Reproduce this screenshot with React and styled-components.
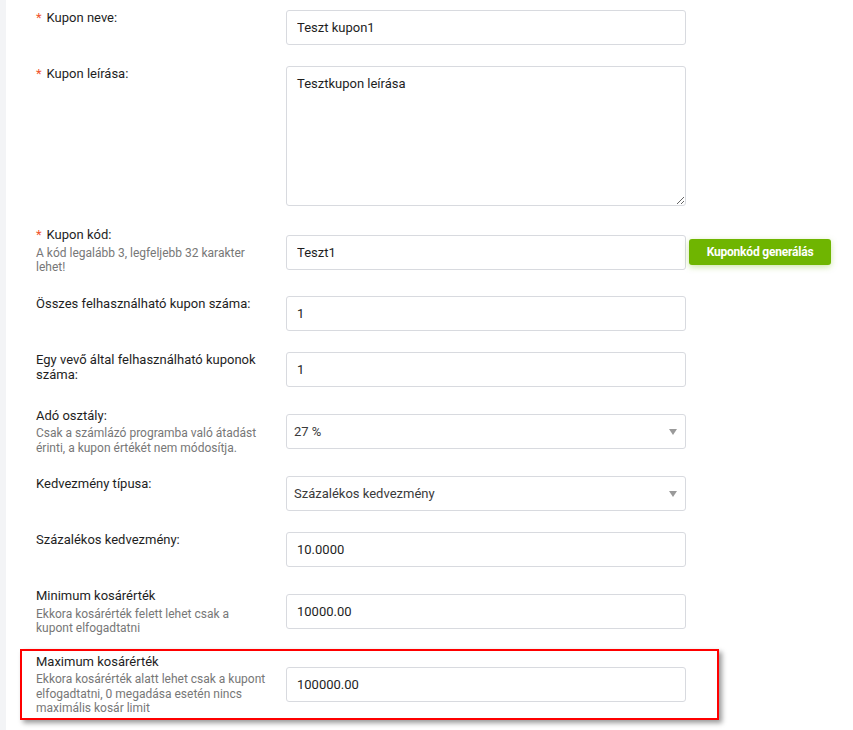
import React from 'react';
import styled, { createGlobalStyle } from 'styled-components';

const GlobalStyle = createGlobalStyle`
  html, body {
    margin: 0;
    padding: 0;
    background: #fff;
  }
  body {
    font-family: Roboto, "Liberation Sans", Arial, sans-serif;
    color: #222;
  }
`;

const Page = styled.div`
  display: flex;
  min-height: 730px;
`;

const SideStrip = styled.div`
  width: 6px;
  flex-shrink: 0;
  background: #f3f4f6;
`;

const Main = styled.div`
  flex: 1;
  padding-left: 30px;
`;

const Form = styled.form`
  display: flex;
  flex-direction: column;
  width: 650px;
`;

const Row = styled.div`
  display: flex;
  align-items: center;
  padding: ${(p) => (p.$highlight ? '3px 31px 2px 14px' : '10px 0 11px')};
  margin: ${(p) => (p.$highlight ? '2px -33px 0 -16px' : '0')};
  border: ${(p) => (p.$highlight ? '2px solid #f00' : 'none')};
  box-shadow: ${(p) => (p.$highlight ? '3px 3px 5px rgba(0, 0, 0, 0.4)' : 'none')};
`;

const LabelCell = styled.div`
  align-self: flex-start;
  width: 250px;
  flex-shrink: 0;
  padding-right: 18px;
  box-sizing: border-box;
`;

const Label = styled.label`
  display: block;
  font-size: 13px;
  line-height: normal;
  color: #1e1e1e;
`;

const Required = styled.span`
  color: #f0542d;
  margin-right: 5px;
`;

const Help = styled.div`
  margin-top: 3.5px;
  font-size: 12px;
  line-height: 14.5px;
  color: #777;
`;

const FieldCell = styled.div`
  display: flex;
  align-items: center;
  gap: 3px;
  padding-top: ${(p) => (p.$nudge ? '3px' : '0')};
`;

const Input = styled.input`
  width: 400px;
  height: 35px;
  box-sizing: border-box;
  border: 1px solid #d8dadf;
  border-radius: 3px;
  padding: 0 10px;
  font-family: Roboto, "Liberation Sans", Arial, sans-serif;
  font-size: 13px;
  color: #1e1e1e;
  background: #fff;
  outline: none;
`;

const TextArea = styled.textarea`
  display: block;
  width: 400px;
  height: 140px;
  box-sizing: border-box;
  border: 1px solid #d8dadf;
  border-radius: 3px;
  padding: 9px 10px;
  margin: 0;
  font-family: Roboto, "Liberation Sans", Arial, sans-serif;
  font-size: 13px;
  color: #1e1e1e;
  outline: none;
`;

const SelectWrap = styled.div`
  position: relative;
  width: 400px;
`;

const Select = styled.select`
  width: 100%;
  height: 35px;
  box-sizing: border-box;
  border: 1px solid #d8dadf;
  border-radius: 3px;
  padding: 0 28px 0 7px;
  font-family: Roboto, "Liberation Sans", Arial, sans-serif;
  font-size: 13px;
  color: #3a3a3a;
  background: #fff;
  appearance: none;
  -webkit-appearance: none;
  outline: none;
`;

const Arrow = styled.span`
  position: absolute;
  right: 9px;
  top: 15px;
  width: 0;
  height: 0;
  border-left: 4px solid transparent;
  border-right: 4px solid transparent;
  border-top: 6px solid #9a9a9a;
  pointer-events: none;
`;

const GreenButton = styled.button`
  width: 142px;
  height: 26px;
  border: none;
  border-radius: 3px;
  background: #6fb501;
  color: #fff;
  font-family: Roboto, "Liberation Sans", Arial, sans-serif;
  font-size: 12px;
  font-weight: 700;
  letter-spacing: -0.2px;
  box-shadow: 0 2px 6px rgba(111, 181, 1, 0.35);
  cursor: pointer;
`;

function Field({ label, required, help, highlight, nudge, children }) {
  return (
    <Row $highlight={highlight}>
      <LabelCell>
        <Label>
          {required && <Required>*</Required>}
          {label}
        </Label>
        {help && <Help>{help}</Help>}
      </LabelCell>
      <FieldCell $nudge={nudge}>{children}</FieldCell>
    </Row>
  );
}

function Dropdown({ value, options }) {
  return (
    <SelectWrap>
      <Select defaultValue={value}>
        {options.map((o) => (
          <option key={o} value={o}>{o}</option>
        ))}
      </Select>
      <Arrow />
    </SelectWrap>
  );
}

export default function App() {
  return (
    <>
      <GlobalStyle />
      <Page>
        <SideStrip />
        <Main>
          <Form onSubmit={(e) => e.preventDefault()}>
            <Field label="Kupon neve:" required>
              <Input defaultValue="Teszt kupon1" />
            </Field>
            <Field label="Kupon leírása:" required>
              <TextArea defaultValue="Tesztkupon leírása" />
            </Field>
            <Field
              label="Kupon kód:"
              required
              nudge
              help="A kód legalább 3, legfeljebb 32 karakter lehet!"
            >
              <Input defaultValue="Teszt1" />
              <GreenButton type="button">Kuponkód generálás</GreenButton>
            </Field>
            <Field label="Összes felhasználható kupon száma:">
              <Input defaultValue="1" />
            </Field>
            <Field label="Egy vevő által felhasználható kuponok száma:">
              <Input defaultValue="1" />
            </Field>
            <Field
              label="Adó osztály:"
              help="Csak a számlázó programba való átadást érinti, a kupon értékét nem módosítja."
            >
              <Dropdown value="27 %" options={['27 %', '18 %', '5 %', '0 %']} />
            </Field>
            <Field label="Kedvezmény típusa:">
              <Dropdown
                value="Százalékos kedvezmény"
                options={['Százalékos kedvezmény', 'Fix összegű kedvezmény']}
              />
            </Field>
            <Field label="Százalékos kedvezmény:">
              <Input defaultValue="10.0000" />
            </Field>
            <Field
              label="Minimum kosárérték"
              help="Ekkora kosárérték felett lehet csak a kupont elfogadtatni"
            >
              <Input defaultValue="10000.00" />
            </Field>
            <Field
              label="Maximum kosárérték"
              help="Ekkora kosárérték alatt lehet csak a kupont elfogadtatni, 0 megadása esetén nincs maximális kosár limit"
              highlight
            >
              <Input defaultValue="100000.00" />
            </Field>
          </Form>
        </Main>
      </Page>
    </>
  );
}
